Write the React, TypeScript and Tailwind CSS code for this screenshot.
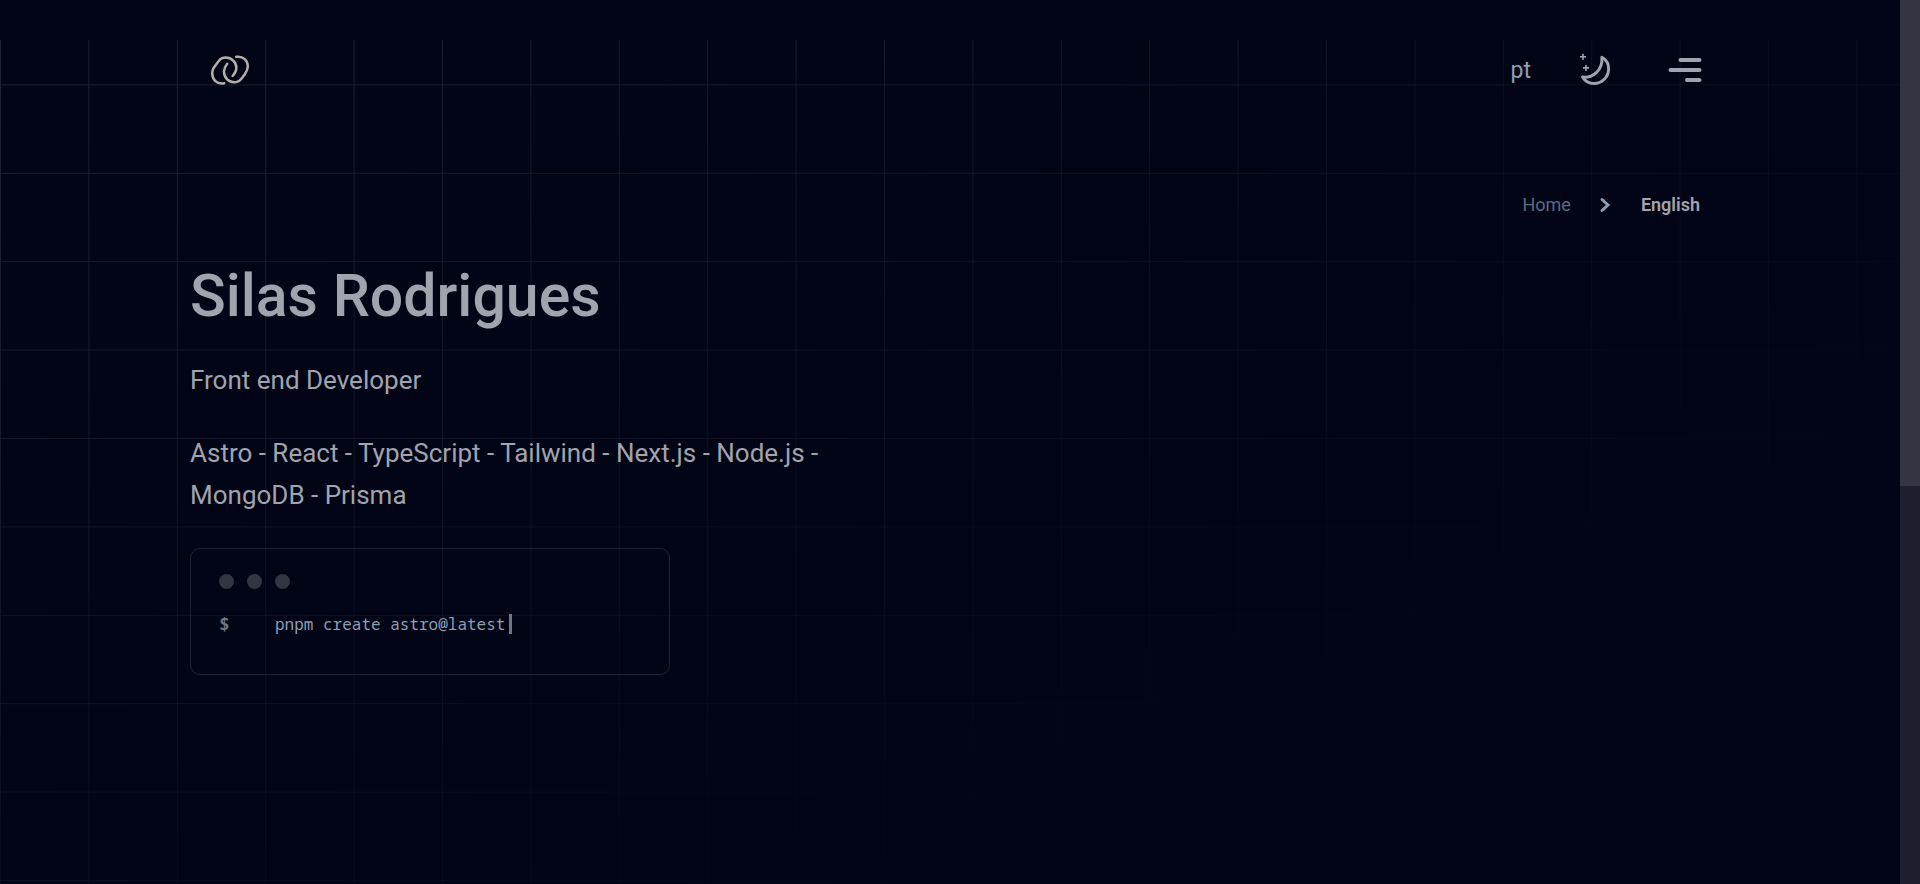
function GridBackdrop() {
  return (
    <div
      aria-hidden="true"
      className="pointer-events-none absolute inset-x-0 top-10 bottom-0 text-[#a3a6b4] [mask-image:linear-gradient(to_bottom_right,rgba(0,0,0,0.19),rgba(0,0,0,0.07)_45%,transparent_78%)]"
    >
      <svg className="h-full w-full">
        <defs>
          <pattern id="grid" width="88.4" height="88.4" y="-44" patternUnits="userSpaceOnUse">
            <path d="M0.5 0V88.4M0 0.5H88.4" fill="none" stroke="currentColor" />
          </pattern>
        </defs>
        <rect width="100%" height="100%" fill="url(#grid)" />
      </svg>
    </div>
  );
}

function Logo() {
  return (
    <svg className="h-8 w-10" viewBox="0 0 40 32" fill="none" stroke="#b3afa9" strokeWidth="2.5" strokeLinecap="round">
      <path d="M14.2 29.2C6 30.5 2.2 25 2.2 19C2.2 15.5 3.6 13.6 5.5 11.2L8.6 7.2C10.6 4.6 12.8 3.6 15.8 3.6C21.5 3.6 26.4 8.3 26.4 14C26.4 17.2 24.9 19.5 22.6 22" />
      <path d="M26.2 2.8C33.5 1.8 37.8 7 37.8 12.5C37.8 15.6 36.6 17.6 34.8 20.2L31.6 24.4C29.6 27 27.4 28.3 24 28.3C18.4 28.3 14 23.6 14 17.8C14 14.4 15.2 12.2 17.2 9.8" />
    </svg>
  );
}

function MoonIcon() {
  return (
    <svg className="h-[34px] w-8" viewBox="0 0 32 34" fill="none" stroke="#a1a3ae" strokeLinecap="round" strokeLinejoin="round">
      <path strokeWidth="3" d="M22.9 4.3C27.8 7 29.9 10.9 29.6 16.5C29.1 24.5 22.9 30.5 14.9 30.5C10 30.5 6.2 28.5 3.5 24C13.5 25.3 23.9 17.5 22.9 4.3Z" />
      <path strokeWidth="1.6" strokeLinecap="butt" d="M4 .8V6.8M1 3.8H7M7 11.9V17.9M4 14.9H10" />
    </svg>
  );
}

function MenuIcon() {
  return (
    <svg className="h-6 w-9" viewBox="0 0 36 24" stroke="#a1a3ae" strokeWidth="4" strokeLinecap="round">
      <path d="M13.5 2H32.5M3.5 12H32.5M20 22H32.5" />
    </svg>
  );
}

export default function App() {
  return (
    <div className="flex min-h-screen bg-[#020515] font-['Roboto',sans-serif] text-[#a1a3ae]">
      <div className="relative min-w-0 flex-1">
        <GridBackdrop />
        <div className="relative mx-[10%]">
          <header className="flex h-28 items-center justify-between pt-7 pr-[7px] pl-5">
            <a href="#home" aria-label="Home page">
              <Logo />
            </a>
            <nav className="flex items-center">
              <a href="#pt" className="pt-0.5 text-[23px] text-[#8f9db5]">
                pt
              </a>
              <button type="button" aria-label="Toggle theme" className="ml-12">
                <MoonIcon />
              </button>
              <button type="button" aria-label="Open menu" className="ml-14">
                <MenuIcon />
              </button>
            </nav>
          </header>

          <nav aria-label="Breadcrumb" className="mt-[81px] flex items-center justify-end pr-2.5 text-[18px] leading-6">
            <a href="#home" className="text-[#5b6b85]">
              Home
            </a>
            <svg className="mr-[30px] ml-7 h-4 w-3" viewBox="0 0 12 16" fill="none" stroke="#8f9db5" strokeWidth="3" strokeLinecap="round">
              <path d="M3 2.5L9 8L3 13.5" />
            </svg>
            <span aria-current="page" className="font-semibold">
              English
            </span>
          </nav>

          <main>
            <h1 className="mt-10 text-[59px] leading-[78px] font-medium">Silas Rodrigues</h1>
            <p className="mt-6 text-[26px] leading-[42px]">Front end Developer</p>
            <p className="mt-[31px] max-w-[650px] text-[26px] leading-[42px]">
              Astro - React - TypeScript - Tailwind - Next.js - Node.js - MongoDB - Prisma
            </p>
            <section aria-label="Terminal" className="mt-8 h-[127px] max-w-[480px] rounded-[10px] border border-[#20222f] px-7 pt-[25px]">
              <div className="flex gap-[13px]">
                <span className="size-[15px] rounded-full bg-[#333542]" />
                <span className="size-[15px] rounded-full bg-[#333542]" />
                <span className="size-[15px] rounded-full bg-[#333542]" />
              </div>
              <div className="mt-[23px] flex h-6 items-center font-['Noto_Sans_Mono','DejaVu_Sans_Mono',monospace] text-base">
                <span className="w-14 text-lg font-bold text-[#74767f]">$</span>
                <code className="font-['Noto_Sans_Mono','DejaVu_Sans_Mono',monospace] text-[#8f9db5]">pnpm create astro@latest</code>
                <span className="ml-1 h-5 w-[3px] bg-[#74767f]" />
              </div>
            </section>
          </main>
        </div>
      </div>
      <div aria-hidden="true" className="sticky top-0 h-screen w-5 bg-[#1d1f2e]">
        <div className="h-[55%] bg-[#333542]" />
      </div>
    </div>
  );
}
